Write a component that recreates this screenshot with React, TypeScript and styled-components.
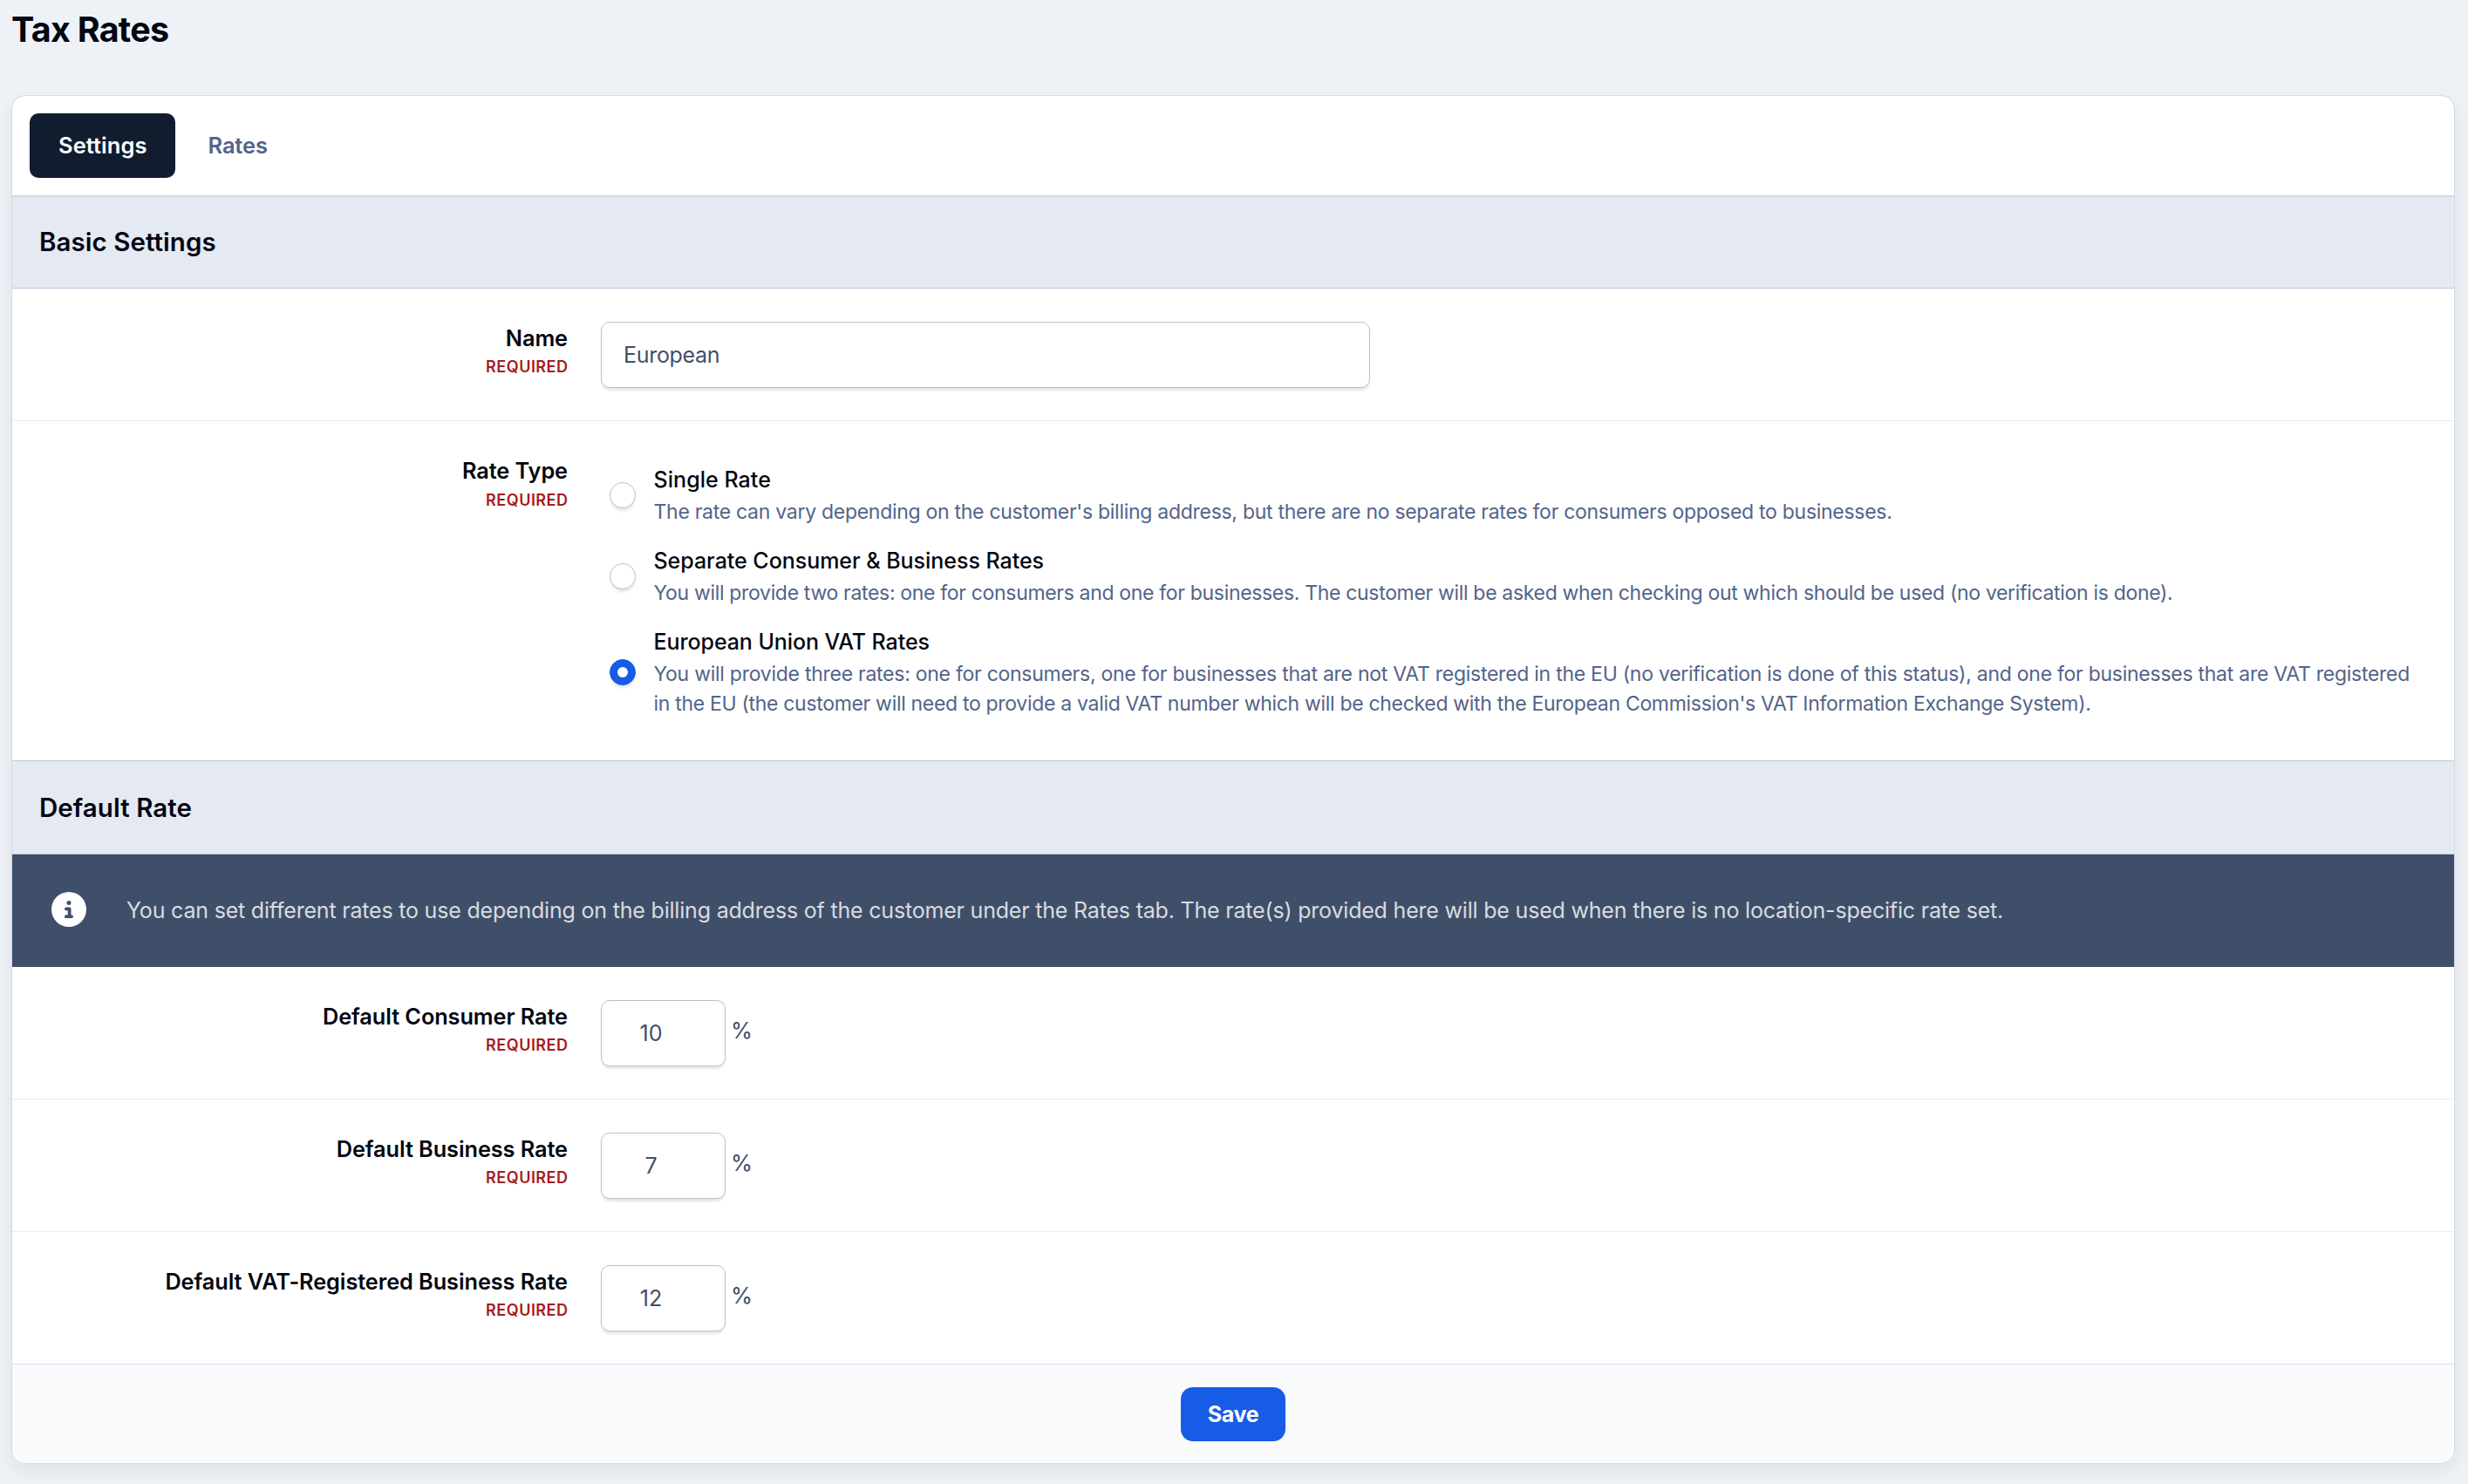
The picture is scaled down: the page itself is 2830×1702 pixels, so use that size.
import React, { useState } from "react";
import styled, { createGlobalStyle } from "styled-components";
import { FaCircleInfo } from "react-icons/fa6";

const ink = "#030712";
const slate = "#3f4f6b";
const line = "#d3dae5";

const GlobalStyle = createGlobalStyle`
  *, *::before, *::after { box-sizing: border-box; }
  body {
    margin: 0;
    min-height: 1702px;
    background: #eef2f7;
    color: ${ink};
    font-family: Inter, "Liberation Sans", sans-serif;
    -webkit-font-smoothing: antialiased;
  }
`;

const Page = styled.main`
  padding: 10px 15px 23px 13px;
`;

const PageTitle = styled.h1`
  margin: 0 0 51px;
  font-size: 39.5px;
  font-weight: 700;
  line-height: 48px;
  letter-spacing: -0.75px;
`;

const Card = styled.section`
  border: 1px solid ${line};
  border-radius: 16px;
  background: #fff;
  overflow: hidden;
  box-shadow: 0 8px 20px rgba(15, 30, 40, 0.07);
`;

const TabBar = styled.nav`
  display: flex;
  gap: 5px;
  padding: 20px;
`;

const Tab = styled.button<{ $active: boolean }>`
  height: 74px;
  padding: 0 32px 1px 33px;
  border: 0;
  border-radius: 10px;
  background: ${({ $active }) => ($active ? "#111c2f" : "transparent")};
  color: ${({ $active }) => ($active ? "#fff" : "#52648a")};
  font: 600 25.5px/73px Inter, sans-serif;
  letter-spacing: ${({ $active }) => ($active ? "0.05px" : "-0.15px")};
`;

const SectionTitle = styled.h2<{ $first?: boolean }>`
  margin: 0;
  padding: 0 32px ${({ $first }) => ($first ? 2 : 0)}px 31px;
  border-top: ${({ $first }) => ($first ? `2px solid ${line}` : "1px solid #bccade")};
  border-bottom: 1px solid #bccade;
  background: #e5e9f2;
  font-size: 29.5px;
  font-weight: 600;
  line-height: ${({ $first }) => ($first ? 102 : 106)}px;
  letter-spacing: 0.06px;
`;

const Row = styled.div<{ $divided?: boolean; $height: number }>`
  display: grid;
  grid-template-columns: 637px 1fr;
  column-gap: 38px;
  height: ${({ $height }) => $height}px;
  border-bottom: ${({ $divided }) => ($divided ? "1px solid #ebebed" : "0")};
`;

const LabelCell = styled.div`
  padding-top: 40px;
  text-align: right;
`;

const Label = styled.div`
  font-size: 25.3px;
  font-weight: 600;
  line-height: 33px;
  letter-spacing: -0.07px;
`;

const Required = styled.div<{ $offset: number }>`
  margin-top: ${({ $offset }) => $offset}px;
  margin-right: -0.5px;
  color: #a81b1b;
  font-size: 18px;
  font-weight: 600;
  line-height: 33px;
  letter-spacing: 0.5px;
  text-transform: uppercase;
`;

const Control = styled.div`
  display: flex;
  align-items: flex-start;
  padding-top: 38px;
`;

const Input = styled.input<{ $numeric?: boolean }>`
  width: ${({ $numeric }) => ($numeric ? 143 : 882)}px;
  height: 76px;
  padding: ${({ $numeric }) => ($numeric ? "0 28px 0 0" : "0 25px")};
  border: 1px solid #b9c0cd;
  border-radius: 10px;
  background: #fff;
  color: ${slate};
  font: 400 25px Inter, sans-serif;
  letter-spacing: ${({ $numeric }) => ($numeric ? "0" : "-0.3px")};
  text-align: ${({ $numeric }) => ($numeric ? "center" : "left")};
  box-shadow: 0 4px 3px -1px rgba(0, 0, 0, 0.1);
  outline: none;
`;

const Unit = styled.span`
  margin-left: 6px;
  color: ${slate};
  font-size: 25.5px;
  line-height: 70px;
`;

const Options = styled.div`
  display: flex;
  flex-direction: column;
  gap: 20px;
  padding-top: 48px;
`;

const Option = styled.label`
  display: flex;
  align-items: center;
  gap: 20.5px;
  padding-left: 10px;
`;

const Radio = styled.input`
  appearance: none;
  display: grid;
  place-content: center;
  flex: none;
  width: 30px;
  height: 30px;
  margin: 1px 0 0;
  border: 1px solid #b9c0cd;
  border-radius: 50%;
  background: #fff;
  box-shadow: 0 4px 3px -1px rgba(0, 0, 0, 0.1);

  &:checked {
    border-color: #175ce6;
    background: #175ce6;
  }

  &:checked::before {
    content: "";
    width: 12px;
    height: 12px;
    border-radius: 50%;
    background: #fff;
  }
`;

const OptionTitle = styled.div<{ $tracking: number }>`
  font-size: 25px;
  font-weight: 500;
  line-height: 38px;
  letter-spacing: ${({ $tracking }) => $tracking}px;
`;

const OptionText = styled.div`
  margin-top: 1px;
  color: #52648a;
  font-size: 23px;
  line-height: 34px;
`;

const TextLine = styled.span<{ $tracking: number }>`
  display: block;
  letter-spacing: ${({ $tracking }) => $tracking}px;
`;

const Notice = styled.div`
  display: flex;
  align-items: center;
  gap: 46px;
  height: 129px;
  padding: 0 0 1px 45px;
  background: #404f69;
  color: #d8dce0;
  font-size: 25px;
  line-height: 30px;
  letter-spacing: -0.194px;

  svg {
    flex: none;
    margin-bottom: 2px;
    color: #fff;
  }
`;

const Footer = styled.footer`
  display: flex;
  justify-content: center;
  height: 114px;
  padding-top: 26px;
  border-top: 1px solid #d8dcea;
  background: #f8fafc;
`;

const SaveButton = styled.button`
  width: 120px;
  height: 62px;
  padding: 0;
  border: 0;
  border-radius: 14px;
  background: #175ce6;
  color: #fff;
  font: 700 25px/62px Inter, sans-serif;
  letter-spacing: -0.3px;
`;

const options = [
  {
    title: "Single Rate",
    tracking: 0.05,
    lines: [
      {
        text: "The rate can vary depending on the customer's billing address, but there are no separate rates for consumers opposed to businesses.",
        tracking: -0.282,
      },
    ],
  },
  {
    title: "Separate Consumer & Business Rates",
    tracking: -0.03,
    lines: [
      {
        text: "You will provide two rates: one for consumers and one for businesses. The customer will be asked when checking out which should be used (no verification is done).",
        tracking: -0.324,
      },
    ],
  },
  {
    title: "European Union VAT Rates",
    tracking: -0.09,
    lines: [
      {
        text: "You will provide three rates: one for consumers, one for businesses that are not VAT registered in the EU (no verification is done of this status), and one for businesses that are VAT registered",
        tracking: -0.262,
      },
      {
        text: "in the EU (the customer will need to provide a valid VAT number which will be checked with the European Commission's VAT Information Exchange System).",
        tracking: -0.311,
      },
    ],
  },
];

const rates = [
  { label: "Default Consumer Rate", value: "10" },
  { label: "Default Business Rate", value: "7" },
  { label: "Default VAT-Registered Business Rate", value: "12" },
];

function FieldLabel({ children, offset = 0 }: { children: React.ReactNode; offset?: number }) {
  return (
    <LabelCell>
      <Label>{children}</Label>
      <Required $offset={offset}>Required</Required>
    </LabelCell>
  );
}

export default function App() {
  const [tab, setTab] = useState("Settings");
  const [rateType, setRateType] = useState(2);

  return (
    <>
      <GlobalStyle />
      <Page>
        <PageTitle>Tax Rates</PageTitle>
        <Card>
          <TabBar>
            {["Settings", "Rates"].map((name) => (
              <Tab key={name} $active={name === tab} onClick={() => setTab(name)}>
                {name}
              </Tab>
            ))}
          </TabBar>

          <SectionTitle $first>Basic Settings</SectionTitle>
          <Row $divided $height={152}>
            <FieldLabel>Name</FieldLabel>
            <Control>
              <Input defaultValue="European" spellCheck={false} />
            </Control>
          </Row>
          <Row $height={389}>
            <FieldLabel offset={1}>Rate Type</FieldLabel>
            <Options>
              {options.map((option, index) => (
                <Option key={option.title}>
                  <Radio
                    type="radio"
                    name="rate-type"
                    checked={rateType === index}
                    onChange={() => setRateType(index)}
                  />
                  <div>
                    <OptionTitle $tracking={option.tracking}>{option.title}</OptionTitle>
                    <OptionText>
                      {option.lines.map((row) => (
                        <TextLine key={row.text} $tracking={row.tracking}>
                          {row.text}
                        </TextLine>
                      ))}
                    </OptionText>
                  </div>
                </Option>
              ))}
            </Options>
          </Row>

          <SectionTitle>Default Rate</SectionTitle>
          <Notice>
            <FaCircleInfo size={40} />
            <span>
              You can set different rates to use depending on the billing address of the customer under the Rates
              tab. The rate(s) provided here will be used when there is no location-specific rate set.
            </span>
          </Notice>
          {rates.map((rate, index) => {
            const last = index === rates.length - 1;
            return (
              <Row key={rate.label} $divided={!last} $height={last ? 151 : 152}>
                <FieldLabel>{rate.label}</FieldLabel>
                <Control>
                  <Input $numeric defaultValue={rate.value} />
                  <Unit>%</Unit>
                </Control>
              </Row>
            );
          })}

          <Footer>
            <SaveButton>Save</SaveButton>
          </Footer>
        </Card>
      </Page>
    </>
  );
}
